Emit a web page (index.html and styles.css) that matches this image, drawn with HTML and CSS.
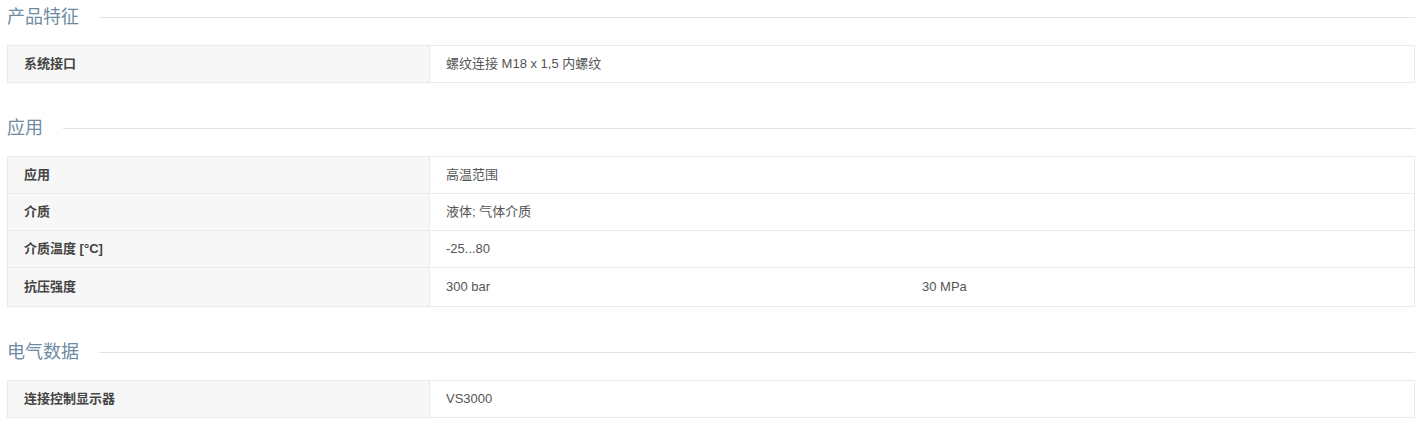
FILE: index.html
```html
<!DOCTYPE html>
<html lang="zh">
<head>
    <meta charset="UTF-8">
    <title>产品数据</title>
    <link rel="stylesheet" href="styles.css">
</head>
<body>

    <section class="gruppe">
        <h2 class="titel"><span>产品特征</span></h2>
        <table class="daten">
            <tr><th>系统接口</th><td>螺纹连接 M18 x 1,5 内螺纹</td></tr>
        </table>
    </section>

    <section class="gruppe">
        <h2 class="titel"><span>应用</span></h2>
        <table class="daten">
            <tr><th>应用</th><td>高温范围</td></tr>
            <tr><th>介质</th><td>液体; 气体介质</td></tr>
            <tr><th>介质温度 [°C]</th><td>-25...80</td></tr>
            <tr class="doppelt"><th>抗压强度</th><td><div class="zwei"><span>300 bar</span><span>30 MPa</span></div></td></tr>
        </table>
    </section>

    <section class="gruppe">
        <h2 class="titel"><span>电气数据</span></h2>
        <table class="daten">
            <tr><th>连接控制显示器</th><td>VS3000</td></tr>
        </table>
    </section>

</body>
</html>
```

FILE: styles.css
```css
body { margin: 0; padding: 5px 7px 0; font-family: "Liberation Sans", Arial, "Noto Sans CJK SC", sans-serif; font-size: 13px; color: #555; background: #fff; }
.gruppe { margin-bottom: 33px; }
.gruppe:last-child { margin-bottom: 0; }
.titel { display: flex; align-items: center; gap: 20px; margin: 0 0 16px; font-size: 18px; line-height: 24px; font-weight: normal; color: #6f8ba3; }
.titel::after { content: ""; flex: 1; height: 1px; background: #e3e3e3; }
.daten { width: 1408px; border-collapse: collapse; }
.daten th, .daten td { border: 1px solid #ebebeb; padding: 10px 16px; height: 16px; line-height: 16px; text-align: left; vertical-align: middle; }
.daten th { width: 389px; background: #f7f7f7; font-weight: bold; color: #444; }
.daten td { color: #555; }
.doppelt th, .doppelt td { padding: 11px 16px; }
.zwei { display: flex; }
.zwei span { flex: 1; }
```
